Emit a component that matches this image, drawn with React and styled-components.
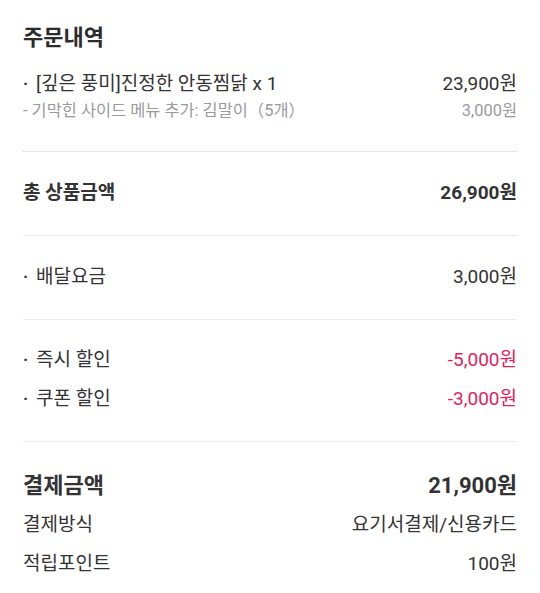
import React from 'react';
import styled, { createGlobalStyle } from 'styled-components';

const GlobalStyle = createGlobalStyle`
  body {
    margin: 0;
    background: #ffffff;
    font-family: Roboto, "Noto Sans CJK KR", sans-serif;
    color: #333333;
  }
`;

const Page = styled.div`
  padding: 0 23px;
`;

const Section = styled.section`
  display: flex;
  flex-direction: column;
  gap: ${(p) => p.gap || 13}px;
  padding: ${(p) => p.pt ?? 28}px 0 ${(p) => p.pb ?? 29}px;
  border-bottom: ${(p) =>
    p.divider === 'dotted' ? '1px dotted #d4d4d4' : p.divider === 'none' ? 'none' : '1px solid #ebebeb'};
`;

const Title = styled.h2`
  margin: 0 0 16px;
  font-size: 22px;
  line-height: 28px;
  font-weight: 700;
  color: #2b2b2b;
`;

const Row = styled.div`
  display: flex;
  justify-content: space-between;
  align-items: center;
  font-size: ${(p) => (p.big ? 22 : p.small ? 16.4 : 19)}px;
  line-height: ${(p) => (p.small ? 22 : 26)}px;
  font-weight: ${(p) => (p.bold ? 700 : 400)};
  color: ${(p) => (p.muted ? '#9a9a9a' : '#333333')};
`;

const Label = styled.span`
  display: flex;
  align-items: center;
`;

const Bullet = styled.span`
  width: 13px;
  font-size: 17px;
  font-weight: 700;
`;

const Amount = styled.span`
  color: ${(p) => (p.discount ? '#e0245e' : 'inherit')};
`;

export default function App() {
  return (
    <>
      <GlobalStyle />
      <Page>
        <Section pt={24} divider="dotted" gap={3}>
          <Title>주문내역</Title>
          <Row>
            <Label><Bullet>·</Bullet>[깊은 풍미]진정한 안동찜닭 x 1</Label>
            <Amount>23,900원</Amount>
          </Row>
          <Row small muted>
            <Label>- 기막힌 사이드 메뉴 추가: 김말이（5개）</Label>
            <Amount>3,000원</Amount>
          </Row>
        </Section>
        <Section>
          <Row bold>
            <Label>총 상품금액</Label>
            <Amount>26,900원</Amount>
          </Row>
        </Section>
        <Section>
          <Row>
            <Label><Bullet>·</Bullet>배달요금</Label>
            <Amount>3,000원</Amount>
          </Row>
        </Section>
        <Section pt={27}>
          <Row>
            <Label><Bullet>·</Bullet>즉시 할인</Label>
            <Amount discount>-5,000원</Amount>
          </Row>
          <Row>
            <Label><Bullet>·</Bullet>쿠폰 할인</Label>
            <Amount discount>-3,000원</Amount>
          </Row>
        </Section>
        <Section pt={31} pb={16} divider="none">
          <Row big bold>
            <Label>결제금액</Label>
            <Amount>21,900원</Amount>
          </Row>
          <Row>
            <Label>결제방식</Label>
            <Amount>요기서결제/신용카드</Amount>
          </Row>
          <Row>
            <Label>적립포인트</Label>
            <Amount>100원</Amount>
          </Row>
        </Section>
      </Page>
    </>
  );
}
